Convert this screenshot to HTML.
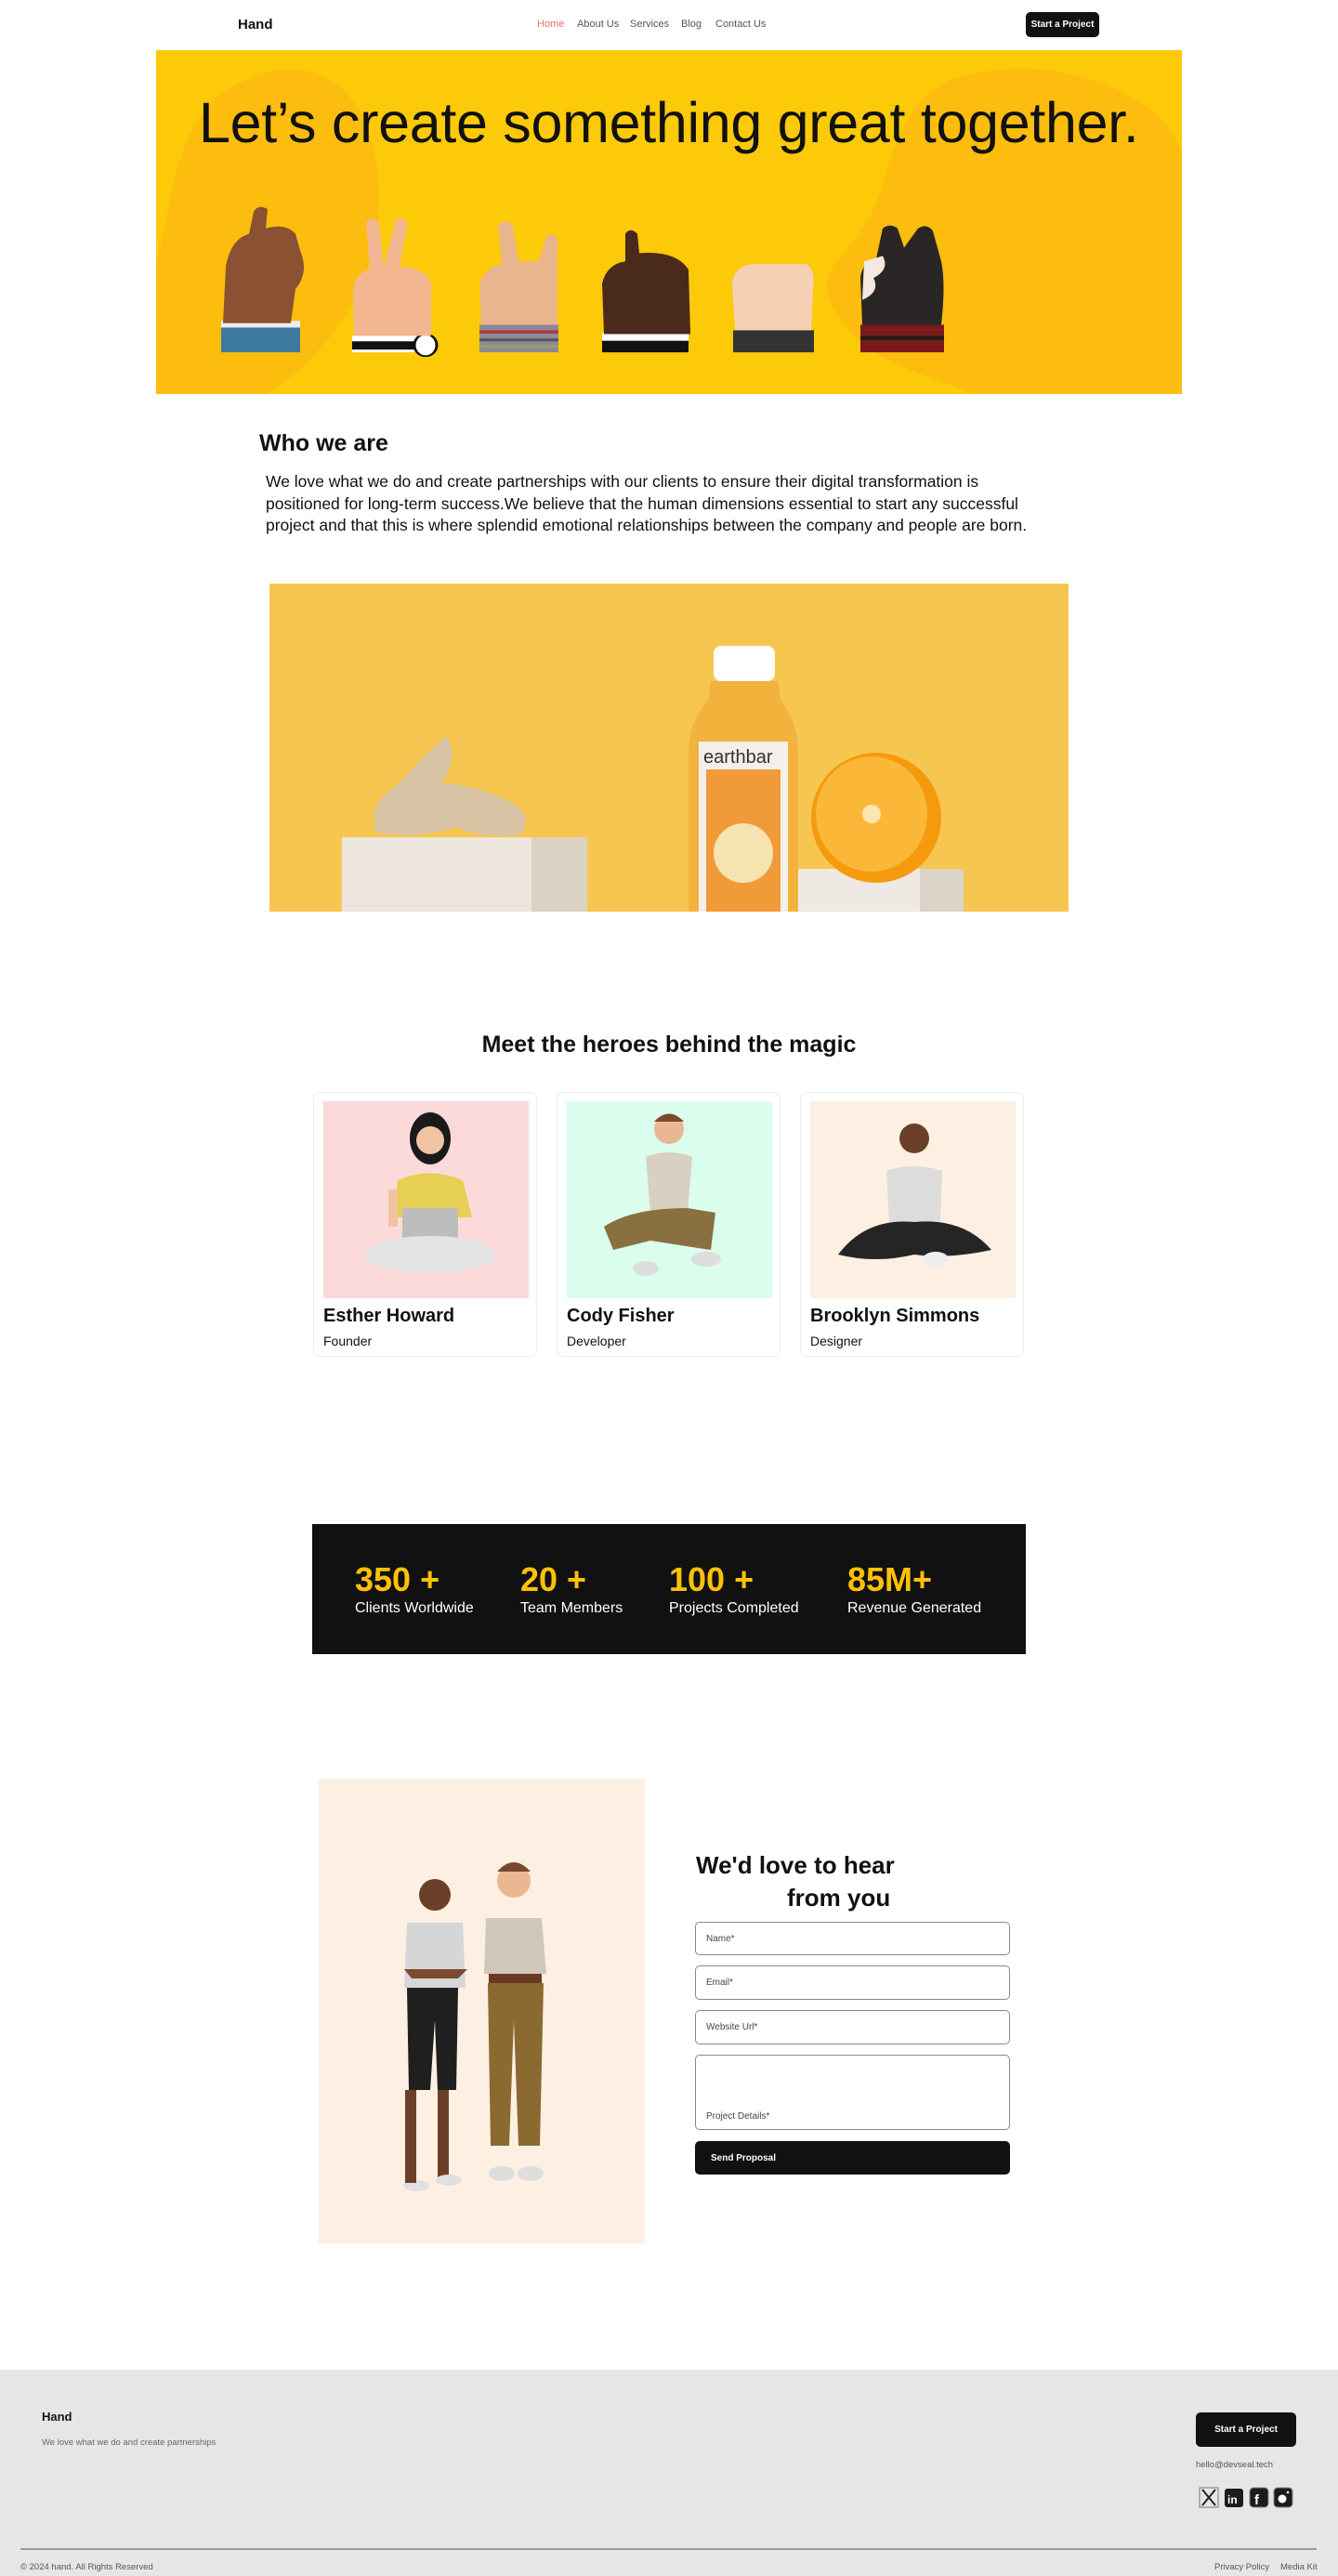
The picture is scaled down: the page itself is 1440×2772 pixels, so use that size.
<!DOCTYPE html>
<html><head><meta charset="utf-8">
<style>
*{box-sizing:border-box;margin:0;padding:0}
body{width:1440px;height:2772px;background:#fff;font-family:"Liberation Sans",Arial,sans-serif;color:#111;position:relative;overflow:hidden}
.abs{position:absolute}
.nav a{position:absolute;top:20px;font-size:11px;color:#555;text-decoration:none}
.btn{background:#111;color:#fff;border-radius:5px;font-size:11px;display:flex;align-items:center;justify-content:center;font-weight:bold}
.inp{position:absolute;left:748px;width:339px;border:1.5px solid #888;border-radius:5px;font-size:10px;color:#444;padding-left:11px;display:flex;align-items:center}
.card{position:absolute;top:1175px;width:241px;height:285px;border:1px solid #eee;border-radius:6px;background:#fff}
.card .im{position:absolute;left:10px;top:9px;width:221px;height:212px}
.card .n{position:absolute;left:10px;top:229px;font-size:20px;font-weight:bold}
.card .r{position:absolute;left:10px;top:259px;font-size:14px}
.stat{position:absolute;top:1680px}
.stat b{display:block;font-size:36px;color:#FFC107;line-height:40px}
.stat span{display:block;color:#fff;font-size:16px;margin-top:2px}
</style></head><body>

<!-- NAV -->
<div class="abs" style="left:256px;top:18px;font-size:15px;font-weight:bold;">Hand</div>
<div class="nav">
<a style="left:578px;color:#e8716a">Home</a>
<a style="left:621px">About Us</a>
<a style="left:678px">Services</a>
<a style="left:733px">Blog</a>
<a style="left:770px">Contact Us</a>
</div>
<div class="abs btn" style="left:1104px;top:13px;width:79px;height:27px;font-size:10px">Start a Project</div>

<!-- HERO -->
<div class="abs" style="left:168px;top:54px;width:1104px;height:370px;background:#FDCA0A;overflow:hidden">
<svg width="1104" height="370" style="position:absolute;left:0;top:0">
<path d="M80 40 C170 -10 240 40 240 160 C240 260 180 330 120 370 L0 370 L0 230 C20 150 20 80 80 40Z" fill="#FCBD0E"/>
<path d="M860 30 C960 0 1080 40 1104 110 L1104 370 L880 370 C800 340 760 330 730 280 C700 230 760 220 780 150 C800 80 820 45 860 30Z" fill="#FCBD0E"/>
</svg>
<div class="abs" style="left:46px;top:43px;font-size:61px;letter-spacing:-0.3px;white-space:nowrap;color:#111">Let’s create something great together.</div>
<svg width="1104" height="370" style="position:absolute;left:0;top:0">
<g transform="translate(0,132.4) scale(1,0.593)">
<rect x="70" y="275" width="85" height="50" fill="#3e7aa0"/><rect x="70" y="268" width="85" height="12" fill="#eee"/>
<path d="M72 272 L75 170 Q80 120 100 110 L105 70 Q110 55 120 65 L118 100 Q140 90 150 110 L155 140 Q165 180 150 210 L145 272Z" fill="#8a5232"/>
<rect x="211" y="295" width="87" height="30" fill="#fff"/><rect x="211" y="305" width="87" height="15" fill="#111"/><ellipse cx="290" cy="312" rx="12" ry="20" fill="#fff" stroke="#111" stroke-width="3"/>
<path d="M213 295 L212 210 Q215 180 230 175 L226 90 Q232 75 240 90 L245 170 L258 85 Q268 75 270 95 L262 170 Q290 170 296 200 L296 295Z" fill="#f2b691"/>
<rect x="348" y="275" width="85" height="50" fill="#8a8a9a"/><rect x="348" y="285" width="85" height="6" fill="#b03a3a"/><rect x="348" y="300" width="85" height="5" fill="#555"/><rect x="348" y="312" width="85" height="5" fill="#a96"/>
<path d="M350 275 L348 200 Q355 170 372 165 L368 95 Q376 80 384 95 L390 160 L412 160 L420 115 Q428 105 432 120 L432 275Z" fill="#e8b58d"/>
<rect x="480" y="297" width="93" height="28" fill="#111"/><rect x="480" y="290" width="93" height="14" fill="#fff"/>
<path d="M482 292 L480 200 Q485 165 505 160 L505 110 Q510 97 518 110 L520 145 Q560 140 573 175 L575 292Z" fill="#4a2a1a"/>
<rect x="621" y="285" width="87" height="40" fill="#333"/>
<path d="M623 285 L620 200 Q622 170 640 165 L700 165 Q710 175 707 210 L705 285Z" fill="#f6d0b4"/>
<rect x="758" y="275" width="90" height="50" fill="#7a1a1a"/><rect x="758" y="295" width="90" height="8" fill="#2a1a1a"/>
<path d="M760 275 L758 190 Q760 160 775 155 L782 100 Q790 90 798 100 L805 135 L820 100 Q830 90 836 105 L845 160 Q850 200 845 275Z" fill="#2b2626"/>
<path d="M760 230 Q780 215 772 190 Q790 175 782 150 L762 160 Z" fill="#f4e8e0"/>
</g>
</svg>
</div>

<!-- WHO WE ARE -->
<div class="abs" style="left:279px;top:463px;font-size:25px;font-weight:bold">Who we are</div>
<div class="abs" style="left:286px;top:507px;width:835px;font-size:17.5px;line-height:23.5px;color:#111">We love what we do and create partnerships with our clients to ensure their digital transformation is positioned for long-term success.We believe that the human dimensions essential to start any successful project and that this is where splendid emotional relationships between the company and people are born.</div>

<!-- IMAGE -->
<div class="abs" style="left:290px;top:628px;width:860px;height:353px;background:#F9C74F;overflow:hidden">
<svg width="860" height="353">
<rect width="860" height="353" fill="#f7c651"/>
<rect x="78" y="273" width="264" height="90" fill="#ece6de"/><rect x="282" y="273" width="60" height="90" fill="#dcd2c4"/>
<path d="M115 268 Q105 235 140 215 Q170 180 190 165 Q205 185 185 215 Q215 215 260 235 Q285 250 270 270 Q230 275 200 262 Q160 275 115 268Z" fill="#d9c5a6"/>
<rect x="569" y="307" width="178" height="50" fill="#eee9e3"/><rect x="700" y="307" width="47" height="50" fill="#dcd4c8"/>
<circle cx="653" cy="252" r="70" fill="#f59a0c"/><ellipse cx="648" cy="248" rx="60" ry="62" fill="#fbb838"/><circle cx="648" cy="248" r="10" fill="#fde6b0"/>
<rect x="478" y="67" width="66" height="38" rx="8" fill="#fff"/>
<path d="M475 105 L547 105 L550 125 Q569 150 569 180 L569 353 L451 353 L451 180 Q451 150 472 125Z" fill="#f2b33c"/>
<rect x="462" y="170" width="96" height="183" fill="#f4efe8"/><rect x="470" y="200" width="80" height="153" fill="#f09a3a"/><circle cx="510" cy="290" r="32" fill="#f7e3b0"/>
<text x="467" y="193" font-family="Liberation Sans" font-size="20" fill="#333">earthbar</text>
</svg>
</div>

<!-- TEAM -->
<div class="abs" style="left:0;width:1440px;top:1110px;text-align:center;font-size:25px;font-weight:bold">Meet the heroes behind the magic</div>
<div class="card" style="left:337px"><div class="im" style="background:#fddada">
<svg width="221" height="212"><ellipse cx="115" cy="40" rx="22" ry="28" fill="#1a1a1a"/><circle cx="115" cy="42" r="15" fill="#f0c4a0"/><path d="M80 85 Q115 70 150 85 L160 125 L75 125Z" fill="#e5cf55"/><rect x="70" y="95" width="10" height="40" fill="#f0c4a0"/><rect x="85" y="115" width="60" height="35" rx="3" fill="#bdbdbd"/><ellipse cx="115" cy="165" rx="70" ry="20" fill="#e4e4e4"/></svg></div>
<div class="n">Esther Howard</div><div class="r">Founder</div></div>
<div class="card" style="left:599px"><div class="im" style="background:#dafdee">
<svg width="221" height="212"><circle cx="110" cy="30" r="16" fill="#e9b892"/><path d="M94 22 Q110 5 126 22Z" fill="#7a4a30"/><path d="M85 60 Q110 50 135 60 L130 120 L90 120Z" fill="#d8d0c0"/><path d="M40 135 Q70 115 130 115 L160 120 L155 160 L90 150 L50 160Z" fill="#8a7040"/><ellipse cx="85" cy="180" rx="14" ry="8" fill="#ddd"/><ellipse cx="150" cy="170" rx="16" ry="8" fill="#ddd"/></svg></div>
<div class="n">Cody Fisher</div><div class="r">Developer</div></div>
<div class="card" style="left:861px"><div class="im" style="background:#fdf0e2">
<svg width="221" height="212"><circle cx="112" cy="40" r="16" fill="#6b4028"/><path d="M82 75 Q112 65 142 75 L140 130 L85 130Z" fill="#dcdcdc"/><path d="M30 165 Q60 125 112 130 Q165 125 195 160 Q150 170 112 165 Q70 175 30 165Z" fill="#252525"/><ellipse cx="135" cy="170" rx="14" ry="8" fill="#eee"/></svg></div>
<div class="n">Brooklyn Simmons</div><div class="r">Designer</div></div>

<!-- STATS -->
<div class="abs" style="left:336px;top:1640px;width:768px;height:140px;background:#111"></div>
<div class="stat" style="left:382px"><b>350 +</b><span>Clients Worldwide</span></div>
<div class="stat" style="left:560px"><b>20 +</b><span>Team Members</span></div>
<div class="stat" style="left:720px"><b>100 +</b><span>Projects Completed</span></div>
<div class="stat" style="left:912px"><b>85M+</b><span>Revenue Generated</span></div>

<!-- CONTACT -->
<div class="abs" style="left:343px;top:1914px;width:351px;height:500px;background:#fdf0e2">
<svg width="351" height="500">
<circle cx="125" cy="125" r="17" fill="#6b4028"/><path d="M95 155 L155 155 L158 225 L92 225Z" fill="#d4d6d8"/><path d="M92 205 L160 205 L150 215 L100 215Z" fill="#7a4a30"/><path d="M95 225 L150 225 L148 335 L128 335 L125 260 L120 335 L97 335Z" fill="#1f1f1f"/><ellipse cx="105" cy="438" rx="14" ry="6" fill="#e0e0e0"/>
<rect x="93" y="335" width="12" height="100" fill="#6b4028"/><rect x="128" y="335" width="12" height="95" fill="#6b4028"/><ellipse cx="140" cy="432" rx="14" ry="6" fill="#e0e0e0"/>
<circle cx="210" cy="110" r="18" fill="#e9b892"/><path d="M192 100 Q210 80 228 100Z" fill="#7a4a30"/><path d="M180 150 L240 150 L245 210 L178 210Z" fill="#cfc7ba"/><rect x="183" y="210" width="57" height="10" fill="#6b3a22"/><path d="M182 220 L242 220 L238 395 L215 395 L210 260 L205 395 L185 395Z" fill="#8a6a30"/><ellipse cx="197" cy="425" rx="14" ry="8" fill="#ddd"/><ellipse cx="228" cy="425" rx="14" ry="8" fill="#ddd"/>
</svg></div>
<div class="abs" style="left:749px;top:1990px;font-size:26px;font-weight:bold;line-height:35px">We'd love to hear<br><span style="padding-left:98px">from you</span></div>
<div class="inp" style="top:2068px;height:36px">Name*</div>
<div class="inp" style="top:2115px;height:37px">Email*</div>
<div class="inp" style="top:2163px;height:37px">Website Url*</div>
<div class="inp" style="top:2211px;height:81px;align-items:flex-end;padding-bottom:8px">Project Details*</div>
<div class="abs btn" style="left:748px;top:2304px;width:339px;height:36px;justify-content:flex-start;padding-left:17px;font-size:10px">Send Proposal</div>

<!-- FOOTER -->
<div class="abs" style="left:0;top:2550px;width:1440px;height:222px;background:#e6e6e6"></div>
<div class="abs" style="left:45px;top:2593px;font-size:13px;font-weight:bold">Hand</div>
<div class="abs" style="left:45px;top:2623px;font-size:9.5px;color:#666">We love what we do and create partnerships</div>
<div class="abs btn" style="left:1287px;top:2596px;width:108px;height:37px;font-size:10px">Start a Project</div>
<div class="abs" style="left:1287px;top:2647px;font-size:9.5px;color:#555">hello@devseal.tech</div>
<svg class="abs" style="left:1290px;top:2676px" width="102" height="24">
<rect x="1" y="1" width="20" height="21" fill="none" stroke="#777"/><path d="M4 3 L18 20 M18 3 L4 20" stroke="#222" stroke-width="2"/>
<rect x="28" y="2" width="20" height="20" rx="3" fill="#1c1c1c"/><text x="31" y="18" font-family="Liberation Sans" font-size="12" font-weight="bold" fill="#fff">in</text>
<rect x="55" y="1" width="20" height="21" rx="4" fill="#1c1c1c" stroke="#888"/><text x="60" y="19" font-family="Liberation Sans" font-size="15" font-weight="bold" fill="#fff">f</text>
<rect x="81" y="1" width="20" height="21" rx="4" fill="#1c1c1c" stroke="#888"/><circle cx="90" cy="13" r="4.5" fill="#fff"/><circle cx="96" cy="6" r="1.3" fill="#fff"/>
</svg>
<div class="abs" style="left:22px;top:2742px;width:1395px;height:2px;background:#999"></div>
<div class="abs" style="left:22px;top:2757px;font-size:9.5px;color:#555">© 2024 hand. All Rights Reserved</div>
<div class="abs" style="left:1307px;top:2757px;font-size:9.5px;color:#555">Privacy Policy</div>
<div class="abs" style="left:1378px;top:2757px;font-size:9.5px;color:#555">Media Kit</div>
</body></html>
